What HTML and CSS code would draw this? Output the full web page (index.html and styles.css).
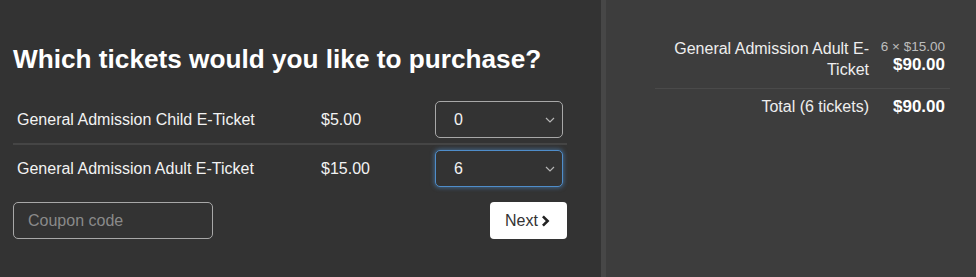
FILE: index.html
```html
<!DOCTYPE html>
<html lang="en">
<head>
    <meta charset="UTF-8">
    <meta name="viewport" content="width=device-width, initial-scale=1.0">
    <title>Tickets</title>
    <link rel="stylesheet" href="styles.css">
</head>
<body>

    <div class="checkout">
        <!-- Ticket selection -->
        <div class="tickets">
            <h1>Which tickets would you like to purchase?</h1>

            <div class="ticket-list">
                <div class="ticket-row">
                    <span class="ticket-name">General Admission Child E-Ticket</span>
                    <span class="ticket-price">$5.00</span>
                    <div class="qty">
                        <select class="qty-select">
                            <option selected>0</option>
                            <option>1</option>
                        </select>
                        <svg class="qty-arrow" viewBox="0 0 10 6" width="10" height="6"><polyline points="1,1 5,5 9,1" fill="none" stroke="#b5b5b5" stroke-width="1.2"/></svg>
                    </div>
                </div>
                <div class="ticket-row">
                    <span class="ticket-name">General Admission Adult E-Ticket</span>
                    <span class="ticket-price">$15.00</span>
                    <div class="qty">
                        <select class="qty-select focused">
                            <option>0</option>
                            <option selected>6</option>
                        </select>
                        <svg class="qty-arrow" viewBox="0 0 10 6" width="10" height="6"><polyline points="1,1 5,5 9,1" fill="none" stroke="#b5b5b5" stroke-width="1.2"/></svg>
                    </div>
                </div>
            </div>

            <div class="actions">
                <input type="text" class="coupon" placeholder="Coupon code">
                <button type="button" class="next-btn">Next
                    <svg viewBox="0 0 10 14" width="9" height="12"><polyline points="2,1.5 7.5,7 2,12.5" fill="none" stroke="#222" stroke-width="3"/></svg>
                </button>
            </div>
        </div>

        <!-- Order summary -->
        <div class="summary">
            <div class="summary-table">
                <div class="summary-row">
                    <span class="summary-label">General Admission Adult E-Ticket</span>
                    <div class="summary-amount">
                        <span class="unit">6 × $15.00</span>
                        <strong>$90.00</strong>
                    </div>
                </div>
                <div class="summary-row">
                    <span class="summary-label">Total (6 tickets)</span>
                    <div class="summary-amount">
                        <strong>$90.00</strong>
                    </div>
                </div>
            </div>
        </div>
    </div>

</body>
</html>
```

FILE: styles.css
```css
* {
    margin: 0;
    padding: 0;
    box-sizing: border-box;
}

html, body {
    height: 100%;
}

body {
    font-family: 'Liberation Sans', Arial, sans-serif;
    background-color: #333333;
    color: #f2f2f2;
}

.checkout {
    display: flex;
    height: 100%;
}

/* Left side */
.tickets {
    width: 601px;
    padding: 44px 34px 0 13px;
}

h1 {
    font-size: 26.2px;
    line-height: 30px;
    font-weight: bold;
    color: #ffffff;
    margin-bottom: 22px;
}

.ticket-row {
    display: grid;
    grid-template-columns: 304px 114px 136px;
    align-items: center;
    padding: 5px 0;
    font-size: 16px;
}

.ticket-row + .ticket-row {
    border-top: 2px solid #454545;
}

.ticket-name,
.ticket-price {
    padding-left: 4px;
}

.qty {
    position: relative;
    padding: 0 4px;
}

.qty-select {
    appearance: none;
    -webkit-appearance: none;
    width: 128px;
    height: 37px;
    padding: 0 18px;
    font-family: inherit;
    font-size: 16px;
    color: #f2f2f2;
    background-color: #333333;
    border: 1px solid #a8a8a8;
    border-radius: 5px;
    outline: none;
}

.qty-select.focused {
    border-color: #4f8dca;
    box-shadow: 0 0 4px 1px rgba(79, 141, 202, 0.55);
}

.qty-arrow {
    position: absolute;
    right: 12px;
    top: 16px;
}

.actions {
    display: flex;
    justify-content: space-between;
    margin-top: 10px;
}

.coupon {
    width: 200px;
    height: 37px;
    padding: 0 14px;
    font-family: inherit;
    font-size: 16px;
    color: #f2f2f2;
    background-color: #333333;
    border: 1px solid #a8a8a8;
    border-radius: 5px;
    outline: none;
}

.coupon::placeholder {
    color: #8a8a8a;
}

.next-btn {
    display: flex;
    align-items: center;
    gap: 3px;
    width: 77px;
    height: 37px;
    padding-left: 15px;
    font-family: inherit;
    font-size: 16px;
    color: #333333;
    background-color: #ffffff;
    border: none;
    border-radius: 4px;
    cursor: pointer;
}

/* Right side */
.summary {
    flex: 1;
    background-color: #3d3d3d;
    border-left: 5px solid #474747;
    padding: 38px 26px 0 49px;
}

.summary-row {
    display: grid;
    grid-template-columns: 1fr 76px;
    padding: 0 5px 8px 5px;
}

.summary-row + .summary-row {
    border-top: 1px solid #4a4a4a;
    padding-top: 7px;
}

.summary-label {
    font-size: 16px;
    line-height: 21px;
    text-align: right;
    color: #eeeeee;
    padding-left: 4px;
}

.summary-amount {
    display: flex;
    flex-direction: column;
    align-items: flex-end;
}

.unit {
    font-size: 13.5px;
    line-height: 16px;
    margin-top: 1px;
    color: #bdbdbd;
}

.summary-amount strong {
    font-size: 17px;
    line-height: 20px;
    color: #ffffff;
}

.summary-row + .summary-row strong {
    line-height: 21px;
}
```
